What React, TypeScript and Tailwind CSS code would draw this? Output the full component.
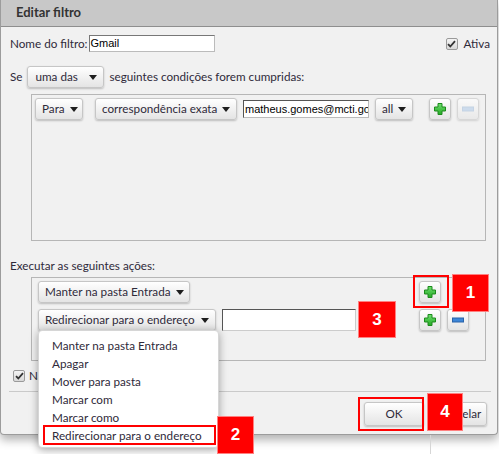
import React from 'react';

const btn =
  'flex items-center rounded-[3px] border border-[#c6c6c6] bg-linear-to-b from-white to-[#e4e4e4] shadow-[0_1px_2px_rgba(0,0,0,0.22)]';

const Caret: React.FC = () => (
  <svg width="8" height="5" viewBox="0 0 8 5" className="ml-auto shrink-0">
    <path d="M0 0h8L4 5z" fill="#1e1e1e" />
  </svg>
);

const Plus: React.FC = () => (
  <svg width="14" height="14" viewBox="0 0 14 14">
    <defs>
      <linearGradient id="pg" x1="0" y1="0" x2="0" y2="1">
        <stop offset="0" stopColor="#6fe06f" />
        <stop offset="1" stopColor="#25a825" />
      </linearGradient>
    </defs>
    <path d="M5 1.5h4v3.5h3.5v4H9v3.5H5V9H1.5V5H5z" fill="url(#pg)" stroke="#1c8a1c" strokeWidth="1" />
  </svg>
);

const Minus: React.FC<{ off?: boolean }> = ({ off }) => (
  <svg width="14" height="14" viewBox="0 0 14 14">
    <rect
      x="1.5"
      y="5"
      width="11"
      height="4"
      fill={off ? '#b5cde9' : '#3d86d8'}
      stroke={off ? '#a7c0dc' : '#2a63a8'}
      strokeWidth="1"
    />
  </svg>
);

const Dropdown: React.FC<{ label: string; w: string; className?: string }> = ({ label, w, className = '' }) => (
  <div className={`${btn} ${w} ${className} h-[22px] shrink-0 pl-[6px] pr-[6px]`}>
    <span className="mr-[5px] whitespace-nowrap">{label}</span>
    <Caret />
  </div>
);

const IconBtn: React.FC<{ children: React.ReactNode; className?: string; faded?: boolean }> = ({
  children,
  className = '',
  faded,
}) => (
  <div className={`${btn} ${className} h-[22px] w-[22px] shrink-0 justify-center ${faded ? 'opacity-60' : ''}`}>
    {children}
  </div>
);

const Check: React.FC = () => (
  <div className="flex h-[12px] w-[12px] items-center justify-center rounded-[2px] border border-[#9a9a9a] bg-linear-to-b from-[#f4f4f4] to-[#d8d8d8]">
    <svg width="9" height="8" viewBox="0 0 9 8">
      <path d="M1 4.2l2.3 2.3L8 1.2" fill="none" stroke="#333" strokeWidth="1.8" />
    </svg>
  </div>
);

const Mark: React.FC<{ n: string; className: string }> = ({ n, className }) => (
  <div
    className={`absolute flex items-center justify-center border border-[#ff8080] bg-[#ff0000] text-[17px] font-bold text-white ${className}`}
    style={{ fontFamily: '"Liberation Sans", Arial, sans-serif' }}
  >
    {n}
  </div>
);

const menuItems = [
  'Manter na pasta Entrada',
  'Apagar',
  'Mover para pasta',
  'Marcar com',
  'Marcar como',
  'Redirecionar para o endereço',
];

const arial = { fontFamily: '"Liberation Sans", Arial, sans-serif' };

export default function App() {
  return (
    <div
      className="relative h-[454px] w-[499px] overflow-hidden bg-white text-[11.7px] text-[#2f2a3a]"
      style={{ fontFamily: 'Lato, "Open Sans", sans-serif' }}
    >
      <div className="h-[435px] w-[498px] rounded-b-[4px] border-x border-b border-[#9c9c9c] bg-[#f1f1f1] shadow-[0_5px_10px_rgba(0,0,0,0.3)]">
        {/* title */}
        <div className="flex h-[27px] items-center border-b border-[#8e8e8e] bg-[#c8c8c8] pl-[15px] text-[13px] font-bold text-[#333]">
          Editar filtro
        </div>

        {/* name row */}
        <div className="mt-[8px] flex h-[17px] items-center pl-[9px] pr-[7px]">
          <span>Nome do filtro:</span>
          <div
            className="ml-[1px] flex h-[17px] w-[126px] items-center border border-[#777] border-b-[#bbb] border-r-[#bbb] bg-white pl-[1px] text-[11px] text-black"
            style={arial}
          >
            Gmail
          </div>
          <div className="ml-auto flex items-center gap-[6px]">
            <Check />
            <span>Ativa</span>
          </div>
        </div>

        {/* condition selector */}
        <div className="mt-[14px] flex h-[22px] items-center pl-[9px]">
          <span>Se</span>
          <Dropdown label="uma das" w="w-[77px]" className="ml-[5px] pl-[7px]" />
          <span className="ml-[5px]">seguintes condições forem cumpridas:</span>
        </div>

        {/* conditions box */}
        <div className="ml-[30px] mt-[6px] h-[147px] w-[455px] border border-[#b6b6b6] pl-[3px] pt-[3px]">
          <div className="flex h-[22px] items-center">
            <Dropdown label="Para" w="w-[48px]" />
            <Dropdown label="correspondência exata" w="w-[142px]" className="ml-[12px]" />
            <div
              className="ml-[6px] flex h-[18px] w-[126px] items-center overflow-hidden whitespace-nowrap border border-[#555] border-b-[#bbb] border-r-[#bbb] bg-white pl-[1px] text-[11px] text-black"
              style={arial}
            >
              matheus.gomes@mcti.gov.br
            </div>
            <Dropdown label="all" w="w-[38px]" className="ml-[6px]" />
            <IconBtn className="ml-[16px]">
              <Plus />
            </IconBtn>
            <IconBtn className="ml-[6px]" faded>
              <Minus off />
            </IconBtn>
          </div>
        </div>

        <div className="mt-[16px] h-[16px] pl-[9px] leading-[16px]">Executar as seguintes ações:</div>

        {/* actions box */}
        <div className="ml-[30px] mt-[4px] h-[84px] w-[455px] border border-[#b6b6b6] pl-[6px] pt-[3px]">
          <div className="flex h-[22px] items-center">
            <Dropdown label="Manter na pasta Entrada" w="w-[152px]" />
            <IconBtn className="ml-[229px]">
              <Plus />
            </IconBtn>
          </div>
          <div className="mt-[6px] flex h-[22px] items-center">
            <Dropdown label="Redirecionar para o endereço" w="w-[178px]" />
            <div className="ml-[6px] h-[22px] w-[134px] border border-[#555] border-b-[#ccc] border-r-[#ccc] bg-white" />
            <IconBtn className="ml-[63px]">
              <Plus />
            </IconBtn>
            <IconBtn className="ml-[6px]">
              <Minus />
            </IconBtn>
          </div>
        </div>

        <div className="mt-[8px] flex h-[13px] items-center pl-[12px]">
          <Check />
          <span className="ml-[4px]">Não processar mais regras</span>
        </div>

        <div className="ml-[8px] mt-[9px] h-px w-[482px] bg-[#cacaca]" />

        <div className="mt-[10px] flex justify-end pr-[10px]">
          <div className={`${btn} h-[24px] w-[60px] justify-center`}>OK</div>
          <div className={`${btn} ml-[7px] h-[24px] w-[56px] justify-center`}>Cancelar</div>
        </div>
      </div>

      <div className="ml-[430px] h-[19px] border-l border-[#d6d6d6]" />

      {/* open dropdown menu */}
      <div className="absolute left-[38px] top-[330px] h-[118px] w-[181px] rounded-[4px] border border-[#d6d6d6] bg-white pt-[5px] shadow-[0_2px_8px_rgba(0,0,0,0.35)]">
        {menuItems.map((t) => (
          <div key={t} className="h-[18px] whitespace-nowrap pl-[13px] leading-[18px]">
            {t}
          </div>
        ))}
      </div>

      {/* annotations */}
      <div className="absolute left-[413px] top-[275px] h-[33px] w-[36px] border-2 border-[#ff0000]" />
      <div className="absolute left-[43px] top-[425px] h-[20px] w-[173px] border-2 border-[#ff0000]" />
      <div className="absolute left-[358px] top-[397px] h-[34px] w-[66px] border-2 border-[#ff0000]" />
      <Mark n="1" className="left-[452px] top-[274px] h-[38px] w-[37px]" />
      <Mark n="3" className="left-[358px] top-[301px] h-[37px] w-[38px]" />
      <Mark n="2" className="left-[217px] top-[416px] h-[38px] w-[37px]" />
      <Mark n="4" className="left-[427px] top-[393px] h-[38px] w-[36px]" />
    </div>
  );
}
